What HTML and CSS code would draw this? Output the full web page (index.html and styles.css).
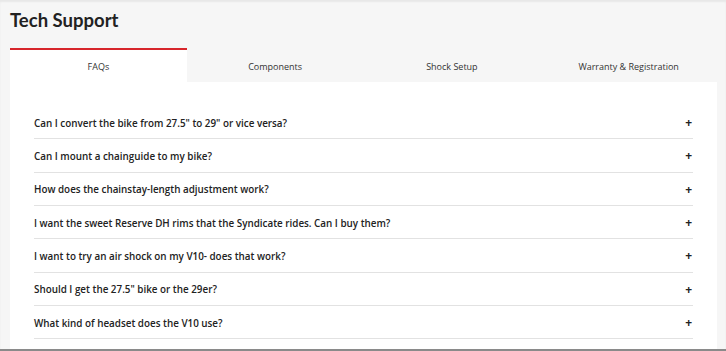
FILE: index.html
```html
<!DOCTYPE html>
<html lang="en">
<head>
    <meta charset="UTF-8">
    <meta name="viewport" content="width=device-width, initial-scale=1.0">
    <title>Tech Support</title>
    <link rel="stylesheet" href="styles.css">
</head>
<body>
    <div class="page">
        <h1 class="titulo">Tech Support</h1>
        <div class="tabs">
            <div class="tab ativo">FAQs</div>
            <div class="tab">Components</div>
            <div class="tab">Shock Setup</div>
            <div class="tab">Warranty &amp; Registration</div>
        </div>
        <div class="painel">
            <div class="pergunta"><span>Can I convert the bike from 27.5" to 29" or vice versa?</span><span class="mais">+</span></div>
            <div class="pergunta"><span>Can I mount a chainguide to my bike?</span><span class="mais">+</span></div>
            <div class="pergunta"><span>How does the chainstay-length adjustment work?</span><span class="mais">+</span></div>
            <div class="pergunta"><span>I want the sweet Reserve DH rims that the Syndicate rides. Can I buy them?</span><span class="mais">+</span></div>
            <div class="pergunta"><span>I want to try an air shock on my V10- does that work?</span><span class="mais">+</span></div>
            <div class="pergunta"><span>Should I get the 27.5" bike or the 29er?</span><span class="mais">+</span></div>
            <div class="pergunta"><span>What kind of headset does the V10 use?</span><span class="mais">+</span></div>
        </div>
    </div>
</body>
</html>
```

FILE: styles.css
```css
body {
    font-family: "Open Sans", Arial, sans-serif;
    background-color: #f6f6f6;
    color: #222;
    margin: 0;
    padding: 0;
    height: 351px;
    overflow: hidden;
    box-shadow: inset 0 2px 2px rgba(0, 0, 0, 0.06);
}

.page {
    padding: 0 9px 0 10px;
    height: 349px;
    border-bottom: 2px solid #8a8a8a;
    display: flex;
    flex-direction: column;
}

.titulo {
    font-family: Lato, "Open Sans", sans-serif;
    font-size: 18.5px;
    font-weight: 700;
    margin: 0;
    padding-top: 9px;
    height: 48px;
    box-sizing: border-box;
    line-height: 22px;
}

.tabs {
    display: flex;
    height: 34px;
}

.tab {
    flex: 1;
    display: flex;
    align-items: center;
    justify-content: center;
    font-size: 9px;
    color: #333;
    border-top: 2px solid transparent;
}

.tab.ativo {
    background-color: white;
    border-top-color: #d7262b;
}

.painel {
    flex: 1;
    background-color: white;
    padding: 24px 24px 0;
}

.pergunta {
    display: flex;
    justify-content: space-between;
    align-items: center;
    height: 33.33px;
    box-sizing: border-box;
    padding-top: 1px;
    border-bottom: 1px solid #e2e2e2;
    font-size: 9.85px;
    font-weight: 600;
}

.mais {
    font-size: 12px;
    font-weight: 700;
    padding-right: 1px;
}
```
